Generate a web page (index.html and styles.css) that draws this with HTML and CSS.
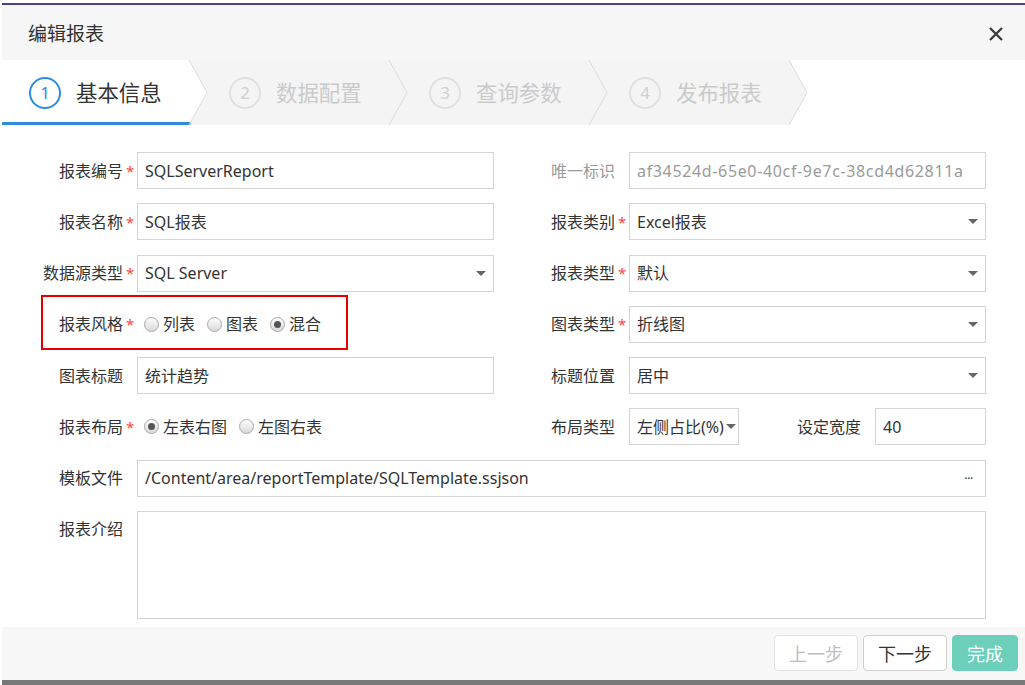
FILE: index.html
```html
<!DOCTYPE html>
<html lang="zh-CN">
<head>
    <meta charset="UTF-8">
    <title>编辑报表</title>
    <link rel="stylesheet" href="styles.css">
</head>
<body>
    <div class="backdrop-top"></div>

    <div class="dialog">
        <!-- 标题栏 -->
        <div class="dialog-header">
            <span class="dialog-title">编辑报表</span>
            <button class="close-btn" title="关闭">
                <svg width="16" height="16" viewBox="0 0 16 16">
                    <path d="M2 2L14 14M14 2L2 14" stroke="#3a3a3a" stroke-width="2.3" fill="none"/>
                </svg>
            </button>
        </div>

        <!-- 步骤条 -->
        <div class="steps">
            <div class="step step-first active">
                <span class="step-num">1</span><span class="step-text">基本信息</span>
            </div>
            <svg class="step-sep" width="20" height="65" viewBox="0 0 20 65">
                <path d="M0 0H1L19 32.5L1 65H0Z" fill="#fff"/>
                <path d="M1 0H20V65H1L19 32.5Z" fill="#f4f4f4"/>
                <rect x="0" y="62" width="2.5" height="3" fill="#2d8cdb"/>
                <path d="M1 0L19 32.5L1 65" fill="none" stroke="#dcdcdc"/>
            </svg>
            <div class="step">
                <span class="step-num">2</span><span class="step-text">数据配置</span>
            </div>
            <svg class="step-sep" width="20" height="65" viewBox="0 0 20 65">
                <path d="M0 0H20V65H0Z" fill="#f4f4f4"/>
                <path d="M1 0L19 32.5L1 65" fill="none" stroke="#dcdcdc"/>
            </svg>
            <div class="step">
                <span class="step-num">3</span><span class="step-text">查询参数</span>
            </div>
            <svg class="step-sep" width="20" height="65" viewBox="0 0 20 65">
                <path d="M0 0H20V65H0Z" fill="#f4f4f4"/>
                <path d="M1 0L19 32.5L1 65" fill="none" stroke="#dcdcdc"/>
            </svg>
            <div class="step">
                <span class="step-num">4</span><span class="step-text">发布报表</span>
            </div>
            <svg class="step-sep" width="20" height="65" viewBox="0 0 20 65">
                <path d="M0 0H1L19 32.5L1 65H0Z" fill="#f4f4f4"/>
                <path d="M1 0H20V65H1L19 32.5Z" fill="#fff"/>
                <path d="M1 0L19 32.5L1 65" fill="none" stroke="#dcdcdc"/>
            </svg>
        </div>

        <!-- 表单 -->
        <div class="form">
            <label class="form-label required">报表编号</label>
            <div class="input">SQLServerReport</div>
            <label class="form-label muted">唯一标识</label>
            <div class="input readonly">af34524d-65e0-40cf-9e7c-38cd4d62811a</div>

            <label class="form-label required">报表名称</label>
            <div class="input">SQL报表</div>
            <label class="form-label required">报表类别</label>
            <div class="input select"><span>Excel报表</span><i class="caret"></i></div>

            <label class="form-label required">数据源类型</label>
            <div class="input select"><span>SQL Server</span><i class="caret"></i></div>
            <label class="form-label required">报表类型</label>
            <div class="input select"><span>默认</span><i class="caret"></i></div>

            <label class="form-label required marked">报表风格</label>
            <div class="radio-group">
                <span class="radio"><i class="radio-dot"></i>列表</span>
                <span class="radio"><i class="radio-dot"></i>图表</span>
                <span class="radio checked"><i class="radio-dot"></i>混合</span>
            </div>
            <label class="form-label required">图表类型</label>
            <div class="input select"><span>折线图</span><i class="caret"></i></div>

            <label class="form-label">图表标题</label>
            <div class="input">统计趋势</div>
            <label class="form-label">标题位置</label>
            <div class="input select"><span>居中</span><i class="caret"></i></div>

            <label class="form-label required">报表布局</label>
            <div class="radio-group">
                <span class="radio checked"><i class="radio-dot"></i>左表右图</span>
                <span class="radio"><i class="radio-dot"></i>左图右表</span>
            </div>
            <label class="form-label">布局类型</label>
            <div class="split">
                <div class="input select narrow"><span>左侧占比(%)</span><i class="caret"></i></div>
                <label class="form-label inline">设定宽度</label>
                <div class="input short">40</div>
            </div>

            <label class="form-label">模板文件</label>
            <div class="input wide">
                <span>/Content/area/reportTemplate/SQLTemplate.ssjson</span>
                <span class="more">···</span>
            </div>

            <label class="form-label top">报表介绍</label>
            <div class="textarea wide"></div>
        </div>

        <!-- 底部按钮 -->
        <div class="dialog-footer">
            <button class="btn" disabled>上一步</button>
            <button class="btn">下一步</button>
            <button class="btn btn-primary">完成</button>
        </div>
    </div>

    <div class="backdrop-bottom"></div>
</body>
</html>
```

FILE: styles.css
```css
/* 基础样式 */
body {
    margin: 0;
    width: 1025px;
    height: 685px;
    background: #fff;
    font-family: "Noto Sans", "Noto Sans CJK SC", sans-serif;
    color: #333;
    overflow: hidden;
}

.backdrop-top {
    height: 3px;
    margin-left: 2px;
    border-bottom: 2px solid #4d4286;
}

.backdrop-bottom {
    height: 5px;
    margin-left: 2px;
    background: #787878;
}

/* 弹窗 */
.dialog {
    margin-left: 2px;
    height: 675px;
    display: flex;
    flex-direction: column;
    background: #fff;
}

.dialog-header {
    height: 55px;
    flex-shrink: 0;
    display: flex;
    align-items: center;
    justify-content: space-between;
    padding: 3px 21px 0 26px;
    box-sizing: border-box;
    background: #f6f6f6;
}

.dialog-title {
    font-size: 19px;
    line-height: 24px;
    color: #333;
}

.close-btn {
    border: none;
    background: none;
    padding: 0;
    width: 16px;
    height: 16px;
    cursor: pointer;
}

.close-btn svg {
    display: block;
}

/* 步骤条 */
.steps {
    height: 65px;
    flex-shrink: 0;
    display: flex;
    background: #fff;
}

.step {
    width: 180px;
    height: 65px;
    box-sizing: border-box;
    display: flex;
    align-items: center;
    padding-left: 21px;
    background: #f4f4f4;
    color: #cacaca;
}

.step-first {
    width: 186px;
    padding-left: 27px;
    background: #fff;
    border-bottom: 3px solid #2d8cdb;
    padding-top: 3px;
}

.step-sep {
    display: block;
    flex-shrink: 0;
}

.step-num {
    width: 28px;
    height: 28px;
    border: 2px solid #e0e0e0;
    border-radius: 50%;
    display: flex;
    align-items: center;
    justify-content: center;
    font-size: 17px;
    margin-right: 15px;
    color: #cfcfcf;
}

.step-text {
    font-size: 21.4px;
    line-height: 28px;
}

.step.active {
    color: #333;
}

.step.active .step-num {
    border-color: #2d8cdb;
    color: #2d8cdb;
}

/* 表单 */
.form {
    flex: 1;
    min-height: 0;
    display: grid;
    grid-template-columns: 135px 357px 135px 357px;
    grid-template-rows: repeat(7, 37px) 108px;
    row-gap: 14.3px;
    padding-top: 27px;
    font-size: 16px;
    align-content: start;
}

.form-label {
    position: relative;
    display: flex;
    align-items: center;
    justify-content: flex-end;
    white-space: nowrap;
    line-height: 20px;
    color: #333;
}

.form-label::after {
    content: "";
    width: 11px;
    padding-left: 3px;
    color: #f44;
    font-size: 15px;
}

.form-label.required::after {
    content: "*";
}

.form-label.muted {
    color: #9a9a9a;
}

.form-label.top {
    align-items: flex-start;
    padding-top: 8px;
}

/* 红色标注框 */
.form-label.marked::before {
    content: "";
    position: absolute;
    left: 39px;
    top: -11px;
    width: 307px;
    height: 55px;
    border: 2px solid #e60000;
    box-sizing: border-box;
    pointer-events: none;
}

.input {
    height: 37px;
    box-sizing: border-box;
    border: 1px solid #d4d4d4;
    padding: 0 7px;
    display: flex;
    align-items: center;
    white-space: nowrap;
    line-height: 20px;
    color: #333;
    background: #fff;
}

.input.readonly {
    color: #9a9a9a;
    letter-spacing: 0.65px;
}

.caret {
    margin-left: auto;
    width: 0;
    height: 0;
    border-left: 5px solid transparent;
    border-right: 5px solid transparent;
    border-top: 5px solid #666;
}

.input.narrow {
    width: 110px;
    padding-right: 2px;
    flex-shrink: 0;
}

.input.short {
    width: 111px;
    flex-shrink: 0;
}

.input.wide,
.textarea.wide {
    grid-column: 2 / 5;
}

.more {
    margin-left: auto;
    margin-right: 5px;
    font-size: 10px;
    font-weight: bold;
    line-height: 10px;
    color: #444;
}

.textarea {
    border: 1px solid #d4d4d4;
    box-sizing: border-box;
}

.split {
    display: flex;
    align-items: stretch;
}

.form-label.inline {
    flex: 1;
}

/* 单选 */
.radio-group {
    display: flex;
    align-items: center;
    padding-left: 7px;
    gap: 12px;
    white-space: nowrap;
}

.radio {
    display: flex;
    align-items: center;
    gap: 4px;
    line-height: 20px;
}

.radio-dot {
    width: 15px;
    height: 15px;
    box-sizing: border-box;
    border: 1px solid #a9a9a9;
    border-radius: 50%;
    background: linear-gradient(#fdfdfd, #d9d9d9);
    display: flex;
    align-items: center;
    justify-content: center;
}

.radio.checked .radio-dot::after {
    content: "";
    width: 7px;
    height: 7px;
    border-radius: 50%;
    background: #555;
}

/* 底部 */
.dialog-footer {
    height: 53px;
    flex-shrink: 0;
    box-sizing: border-box;
    display: flex;
    justify-content: flex-end;
    align-items: flex-start;
    gap: 5px;
    padding: 8px 7px 0 0;
    background: #f7f7f7;
}

.btn {
    height: 36px;
    padding: 0 14px;
    border: 1px solid #cfcfcf;
    border-radius: 4px;
    background: #fff;
    font-family: inherit;
    font-size: 18px;
    color: #333;
    cursor: pointer;
}

.btn:disabled {
    color: #bdbdbd;
    border-color: #e2e2e2;
    cursor: default;
}

.btn-primary {
    background: #6ccfb9;
    border-color: #6ccfb9;
    color: #fff;
}
```
